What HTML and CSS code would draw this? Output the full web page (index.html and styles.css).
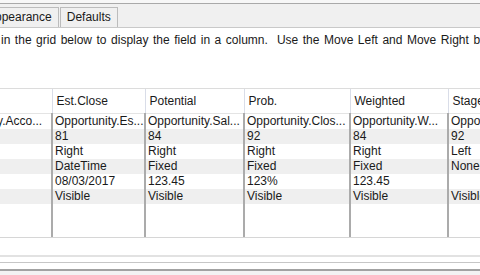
FILE: index.html
```html
<!DOCTYPE html>
<html lang="en">
<head>
  <meta charset="UTF-8">
  <meta name="viewport" content="width=device-width, initial-scale=1.0">
  <title>Column Settings</title>
  <link rel="stylesheet" href="styles.css">
</head>
<body>
  <div class="top-strip"></div>

  <!-- Tab headers (control is scrolled, first tabs are off to the left) -->
  <div class="tab-bar">
    <div class="tab tab-first">Appearance</div>
    <div class="tab">Defaults</div>
  </div>

  <div class="tab-page">
    <p class="hint">in the grid below to display the field in a column.&nbsp; Use the Move Left and Move Right buttons to change the order.</p>

    <!-- Column grid -->
    <div class="grid">
      <table class="grid-table">
        <colgroup>
          <col class="c0">
          <col class="c1">
          <col class="c2">
          <col class="c3">
          <col class="c4">
          <col class="c5">
        </colgroup>
        <thead>
          <tr>
            <th></th>
            <th>Est.Close</th>
            <th>Potential</th>
            <th>Prob.</th>
            <th>Weighted</th>
            <th>Stage</th>
          </tr>
        </thead>
        <tbody>
          <tr>
            <td>Opportunity.Acco...</td>
            <td>Opportunity.Es...</td>
            <td>Opportunity.Sal...</td>
            <td>Opportunity.Clos...</td>
            <td>Opportunity.W...</td>
            <td>Opportunity.Stage</td>
          </tr>
          <tr class="alt">
            <td></td>
            <td>81</td>
            <td>84</td>
            <td>92</td>
            <td>84</td>
            <td>92</td>
          </tr>
          <tr>
            <td></td>
            <td>Right</td>
            <td>Right</td>
            <td>Right</td>
            <td>Right</td>
            <td>Left</td>
          </tr>
          <tr class="alt">
            <td></td>
            <td>DateTime</td>
            <td>Fixed</td>
            <td>Fixed</td>
            <td>Fixed</td>
            <td>None</td>
          </tr>
          <tr>
            <td></td>
            <td>08/03/2017</td>
            <td>123.45</td>
            <td>123%</td>
            <td>123.45</td>
            <td></td>
          </tr>
          <tr class="alt">
            <td></td>
            <td>Visible</td>
            <td>Visible</td>
            <td>Visible</td>
            <td>Visible</td>
            <td>Visible</td>
          </tr>
          <tr class="filler">
            <td></td><td></td><td></td><td></td><td></td><td></td>
          </tr>
        </tbody>
      </table>
    </div>

    <!-- Panel edges below the grid -->
    <div class="bottom-edge">
      <div class="edge edge-light"></div>
      <div class="edge edge-mid"></div>
      <div class="edge edge-dark"></div>
    </div>
  </div>
</body>
</html>
```

FILE: styles.css
```css
body {
  margin: 0;
  width: 480px;
  height: 275px;
  overflow: hidden;
  background-color: #fff;
  font-family: "Liberation Sans", Arial, sans-serif;
  font-size: 12px;
  color: #1a1a1a;
}
.top-strip {
  height: 3px;
  background-color: #f7f7f7;
  border-bottom: 1px solid #a9a9a9;
}
.tab-bar {
  display: flex;
  align-items: flex-end;
  height: 23px;
  background-color: #f0f0f0;
  border-bottom: 1px solid #c9c9c9;
  overflow: hidden;
}
.tab {
  height: 19px;
  line-height: 19px;
  padding: 0 6px;
  margin-right: 1px;
  background-color: #f0f0f0;
  border: 1px solid #bcbcbc;
  border-bottom: none;
  white-space: nowrap;
}
.tab-first {
  margin-left: -20px;
}
.tab-page {
  background-color: #fff;
}
.hint {
  margin: 0;
  padding: 5px 0 0 1px;
  height: 55px;
  line-height: 15px;
  word-spacing: 1.2px;
  white-space: nowrap;
  overflow: hidden;
}
.grid {
  height: 148px;
  overflow: hidden;
  border-top: 1px solid #dcdcdc;
  border-bottom: 1px solid #d6d6d6;
}
.grid-table {
  margin-left: -61px;
  table-layout: fixed;
  border-collapse: collapse;
  width: 609px;
}
.c0 { width: 113px; }
.c1 { width: 93px; }
.c2 { width: 99px; }
.c3 { width: 106px; }
.c4 { width: 98px; }
.c5 { width: 100px; }
.grid-table th {
  height: 24px;
  padding: 0 0 0 4px;
  font-weight: normal;
  text-align: left;
  background-color: #fff;
  border-right: 1px solid #d9dde8;
  border-bottom: 1px solid #e4e4e4;
  white-space: nowrap;
  overflow: hidden;
}
.grid-table td {
  height: 15px;
  line-height: 15px;
  padding: 0 0 0 2px;
  border-right: 2px solid #ababab;
  white-space: nowrap;
  overflow: hidden;
}
.grid-table tr.alt td {
  background-color: #efefef;
}
.grid-table tr.filler td {
  height: 33px;
}
.bottom-edge {
  padding-top: 17px;
}
.edge {
  height: 2px;
}
.edge-light {
  background-color: #e2e2e2;
  margin-bottom: 5px;
}
.edge-mid {
  height: 1px;
  background-color: #c6c6c6;
  margin-bottom: 6px;
}
.edge-dark {
  background-color: #a2a2a2;
  border-bottom: 4px solid #f3f3f3;
}
```
